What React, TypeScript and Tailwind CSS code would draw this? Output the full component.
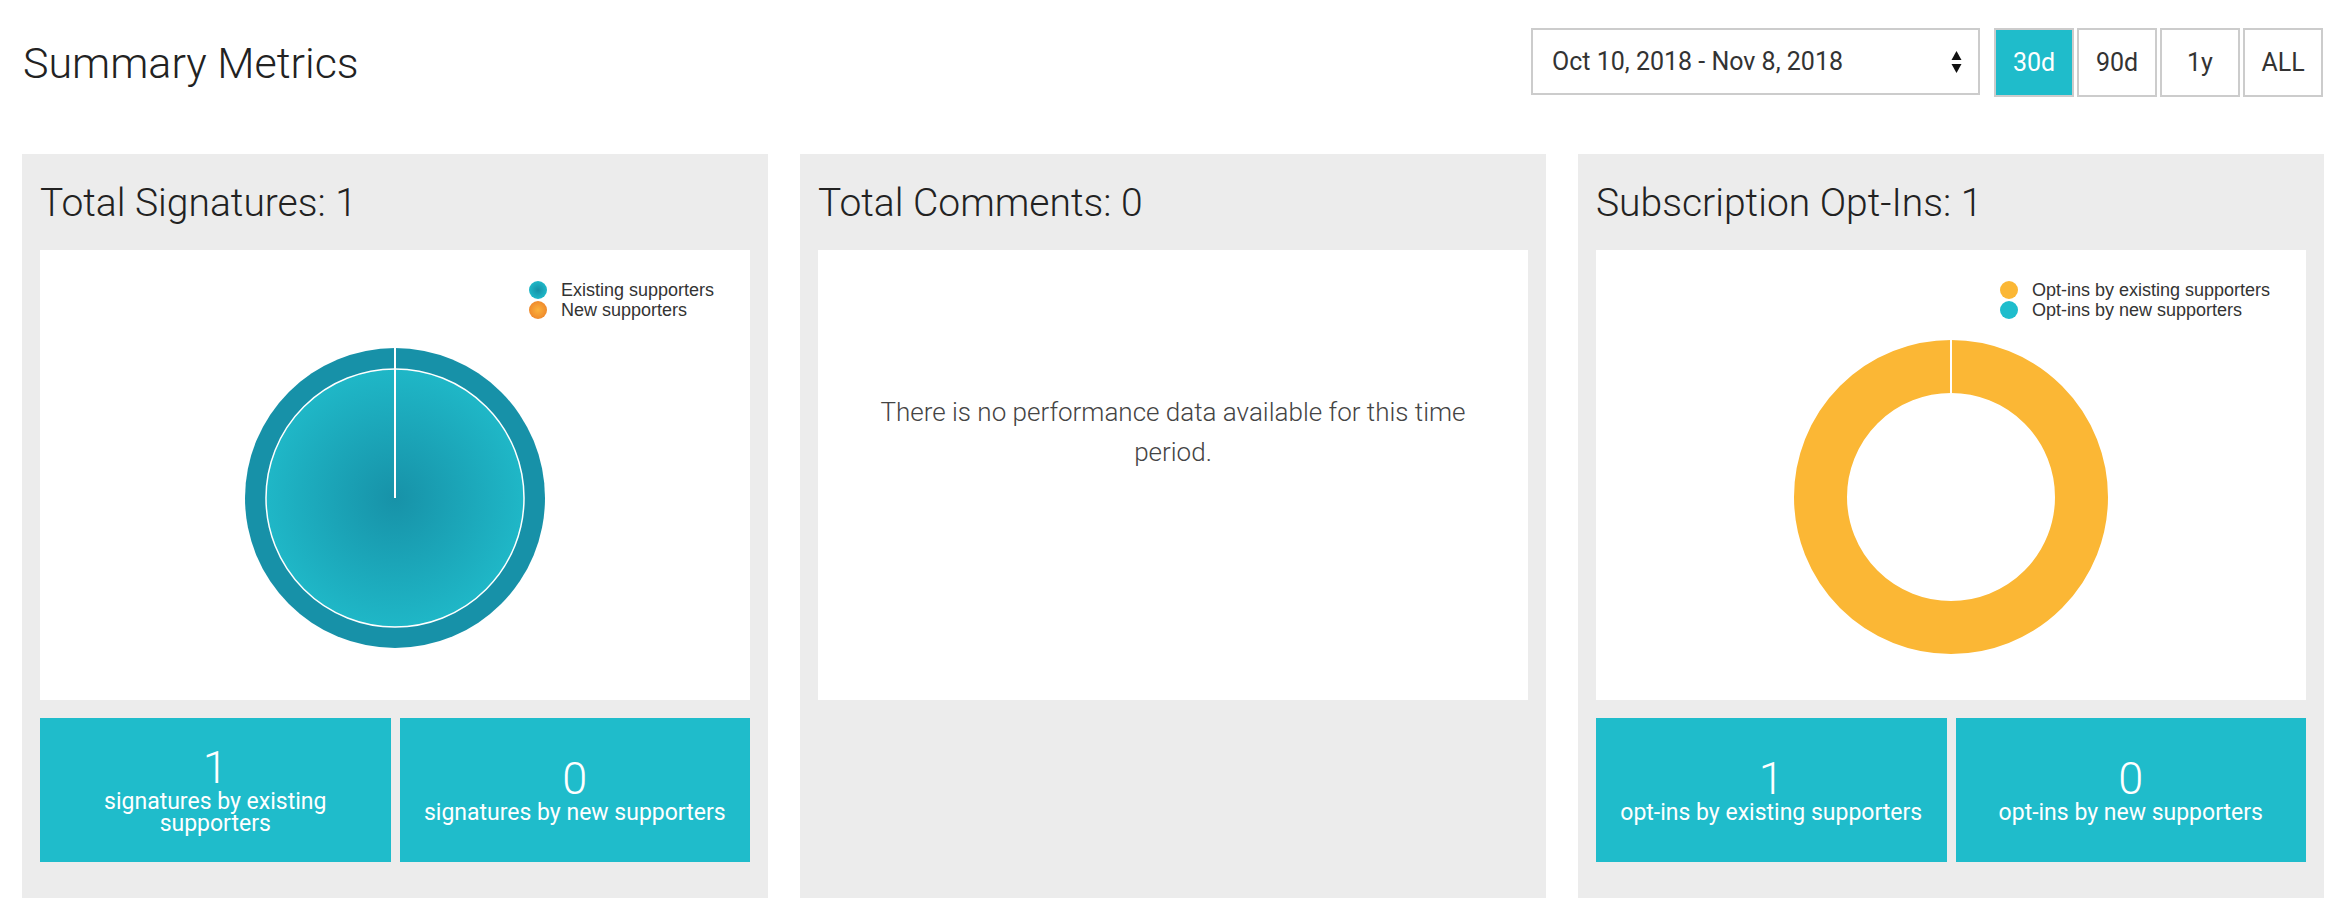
import React from "react";

const ranges = ["30d", "90d", "1y", "ALL"];

const LegendDot = ({ id, inner, outer }: { id: string; inner: string; outer: string }) => (
  <svg width="18" height="18" viewBox="0 0 18 18" className="shrink-0">
    <defs>
      <radialGradient id={id} cx="50%" cy="50%" r="50%">
        <stop offset="0%" stopColor={inner} />
        <stop offset="100%" stopColor={outer} />
      </radialGradient>
    </defs>
    <circle cx="9" cy="9" r="9" fill={`url(#${id})`} />
  </svg>
);

const Legend = ({ items }: { items: { label: string; id: string; inner: string; outer: string }[] }) => (
  <div className="absolute top-[30px] right-[36px] flex flex-col font-['Liberation_Sans',Arial,sans-serif] text-[18px] leading-[20px] text-[#333]">
    {items.map((it) => (
      <div key={it.label} className="flex items-center gap-[14px]">
        <LegendDot id={it.id} inner={it.inner} outer={it.outer} />
        <span>{it.label}</span>
      </div>
    ))}
  </div>
);

const SignaturesPie = () => (
  <svg width="320" height="320" viewBox="0 0 320 320">
    <defs>
      <radialGradient id="sigFill" cx="50%" cy="50%" r="50%">
        <stop offset="0%" stopColor="#1792a8" />
        <stop offset="100%" stopColor="#1fb7c7" />
      </radialGradient>
    </defs>
    <circle cx="160" cy="160" r="150" fill="#1791a8" />
    <circle cx="160" cy="160" r="129" fill="url(#sigFill)" stroke="#ffffff" strokeWidth="1.5" />
    <line x1="160" y1="10" x2="160" y2="160" stroke="#ffffff" strokeWidth="2" />
  </svg>
);

const OptInDonut = () => (
  <svg width="320" height="320" viewBox="0 0 320 320">
    <circle cx="160" cy="160" r="130.5" fill="none" stroke="#fbb735" strokeWidth="53" />
    <line x1="160" y1="3" x2="160" y2="56" stroke="#ffffff" strokeWidth="2" />
  </svg>
);

const StatBox = ({ value, label }: { value: number; label: string }) => (
  <div className="h-[144px] bg-[#1fbccb] text-white flex flex-col items-center justify-center text-center px-[20px]">
    <div className="text-[45px] leading-[46px] font-light">{value}</div>
    <div className="text-[23px] leading-[22px]">{label}</div>
  </div>
);

const Panel = ({ title, children }: { title: string; children: React.ReactNode }) => (
  <div className="bg-[#ececec] px-[18px] pt-[29px] pb-[36px] flex flex-col">
    <h2 className="text-[39px] leading-[40px] font-light text-[#222] mb-[27px]">{title}</h2>
    {children}
  </div>
);

export default function App() {
  return (
    <div className="w-[2330px] h-[902px] bg-white font-['Roboto',sans-serif] overflow-hidden">
      <div className="flex items-center justify-between pt-[28px] pl-[23px] pr-[7px]">
        <h1 className="text-[43px] leading-[48px] font-light text-[#222]">Summary Metrics</h1>
        <div className="flex items-start">
          <div className="w-[449px] h-[67px] border-2 border-[#cccccc] flex items-center justify-between pl-[19px] pr-[16px] text-[25px] text-[#333] mr-[14px]">
            <span>Oct 10, 2018 - Nov 8, 2018</span>
            <svg width="11" height="24" viewBox="0 0 11 24">
              <path d="M5.5 1 L10.5 10 L0.5 10 Z" fill="#111" />
              <path d="M5.5 23 L10.5 14 L0.5 14 Z" fill="#111" />
            </svg>
          </div>
          <div className="flex gap-[3px]">
            {ranges.map((r) => (
              <button
                key={r}
                className={`w-[80px] h-[69px] border-2 border-[#cccccc] text-[25px] flex items-center justify-center ${
                  r === "30d" ? "bg-[#1fbccb] text-white" : "bg-white text-[#333]"
                }`}
              >
                {r}
              </button>
            ))}
          </div>
        </div>
      </div>

      <div className="grid grid-cols-3 gap-[32px] pl-[22px] pr-[6px] mt-[57px]">
        <Panel title="Total Signatures: 1">
          <div className="relative h-[450px] bg-white flex flex-col items-center justify-center pt-[46px]">
            <Legend
              items={[
                { label: "Existing supporters", id: "dotA", inner: "#1690a6", outer: "#1fb8c8" },
                { label: "New supporters", id: "dotB", inner: "#fbb23c", outer: "#ef8a2c" },
              ]}
            />
            <SignaturesPie />
          </div>
          <div className="grid grid-cols-2 gap-[9px] mt-[18px]">
            <StatBox value={1} label="signatures by existing supporters" />
            <StatBox value={0} label="signatures by new supporters" />
          </div>
        </Panel>

        <Panel title="Total Comments: 0">
          <div className="h-[450px] bg-white px-[40px] pt-[142px] text-center text-[26px] leading-[40px] font-light text-[#444]">
            There is no performance data available for this time period.
          </div>
        </Panel>

        <Panel title="Subscription Opt-Ins: 1">
          <div className="relative h-[450px] bg-white flex flex-col items-center justify-center pt-[44px]">
            <Legend
              items={[
                { label: "Opt-ins by existing supporters", id: "dotC", inner: "#fbb735", outer: "#fbb735" },
                { label: "Opt-ins by new supporters", id: "dotD", inner: "#1fbdcc", outer: "#1fbdcc" },
              ]}
            />
            <OptInDonut />
          </div>
          <div className="grid grid-cols-2 gap-[9px] mt-[18px]">
            <StatBox value={1} label="opt-ins by existing supporters" />
            <StatBox value={0} label="opt-ins by new supporters" />
          </div>
        </Panel>
      </div>
    </div>
  );
}
